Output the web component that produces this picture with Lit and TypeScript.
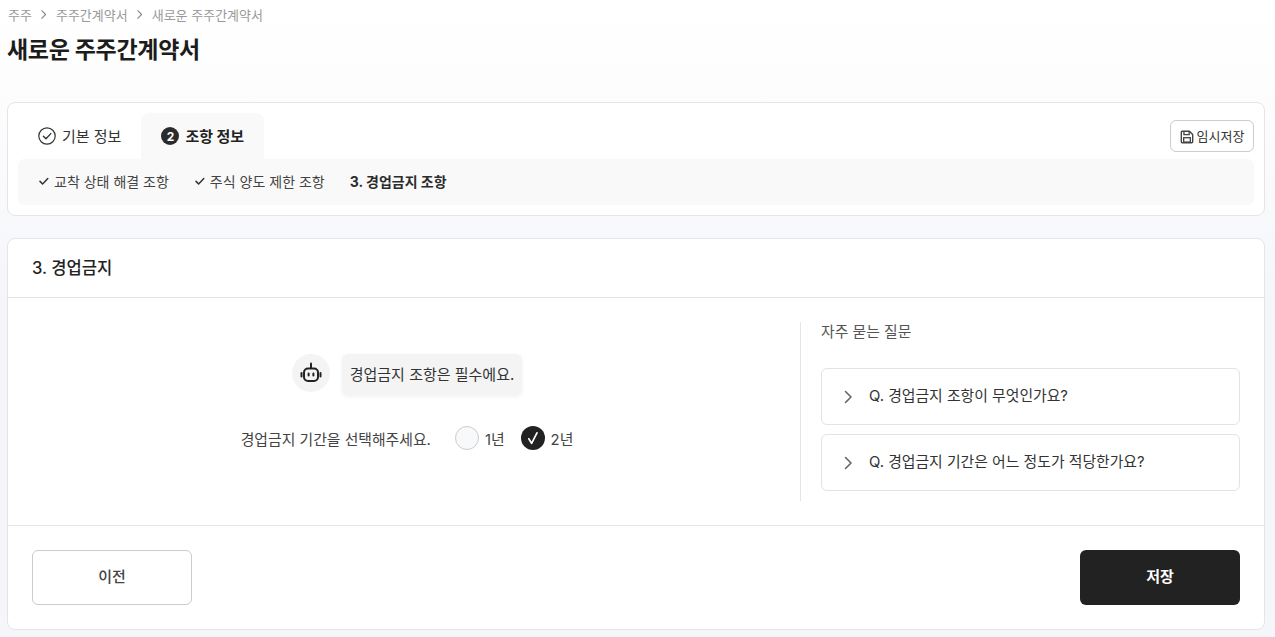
import { LitElement, css, html, svg } from 'lit';
import { customElement } from 'lit/decorators.js';

const chevron = (size: number) => html`
  <svg width=${size} height=${size} viewBox="0 0 16 16" fill="none" stroke="currentColor" stroke-width="1.6" stroke-linecap="round" stroke-linejoin="round">
    <path d="M5.5 2.5 11 8l-5.5 5.5" />
  </svg>
`;

const tick = html`
  <svg class="tick" width="12" height="12" viewBox="0 0 12 12" fill="none" stroke="#333" stroke-width="1.5" stroke-linecap="round" stroke-linejoin="round">
    <path d="M2 6.4 4.6 9l5.2-5.4" />
  </svg>
`;

const floppy = svg`
  <path d="M2.5 1.5h8.3l3.7 3.7v8.3a1 1 0 0 1-1 1h-11a1 1 0 0 1-1-1v-11a1 1 0 0 1 1-1z" fill="none" stroke="#444" stroke-width="1.6" stroke-linejoin="round" />
  <path d="M4.5 2v3.2h6V2" fill="none" stroke="#444" stroke-width="1.5" />
  <rect x="4.2" y="8.8" width="7.6" height="5" fill="none" stroke="#444" stroke-width="1.5" />
`;

@customElement('app-root')
export class AppRoot extends LitElement {
  static styles = css`
    :host {
      display: block;
      box-sizing: border-box;
      height: 637px;
      overflow: hidden;
      padding: 0 10px 0 7px;
      background: linear-gradient(#ffffff 0, #fdfdfe 90px, #f5f6fa 300px);
      font-family: 'Inter', 'Noto Sans CJK KR', sans-serif;
      color: #222;
    }
    .crumbs {
      display: flex;
      align-items: center;
      gap: 6.5px;
      height: 30px;
      padding: 0 0 2px 1px;
      box-sizing: border-box;
      font-size: 13px;
      color: #999;
    }
    .crumbs svg {
      color: #888;
    }
    h1 {
      margin: 0;
      height: 72px;
      padding-top: 5px;
      box-sizing: border-box;
      font-size: 23px;
      line-height: 30px;
      font-weight: 700;
      letter-spacing: -0.3px;
      color: #1c1c1c;
    }
    .card {
      background: #fff;
      border: 1px solid #e5e5e8;
      border-radius: 8px;
      box-sizing: border-box;
    }
    .steps {
      height: 114px;
      padding: 10px;
      margin-bottom: 22px;
    }
    .tabs {
      display: flex;
      align-items: flex-start;
      height: 46px;
    }
    .tab {
      display: flex;
      align-items: center;
      gap: 6px;
      height: 46px;
      padding: 0 20px 2px;
      font-size: 15px;
      color: #333;
      box-sizing: border-box;
    }
    .tab svg,
    .num {
      margin-top: 2px;
    }
    .tab.on {
      background: #f9f9fa;
      border-radius: 8px 8px 0 0;
      font-weight: 700;
      color: #222;
      width: 123px;
    }
    .num {
      width: 18px;
      height: 18px;
      border-radius: 50%;
      background: #2b2b2b;
      color: #fff;
      font-size: 12px;
      font-weight: 700;
      display: flex;
      align-items: center;
      justify-content: center;
    }
    .draft {
      margin: 7px 0 0 auto;
      width: 84px;
      height: 32px;
      box-sizing: border-box;
      border: 1px solid #ccc;
      border-radius: 6px;
      background: #fff;
      display: flex;
      align-items: center;
      justify-content: center;
      gap: 3px;
      font: inherit;
      font-size: 13px;
      color: #333;
      padding: 0 0 2px;
    }
    .draft svg {
      margin-top: 3px;
    }
    .subs {
      display: flex;
      align-items: center;
      gap: 25px;
      height: 46px;
      background: #f9f9fa;
      border-radius: 6px;
      padding: 0 20px 3px;
      box-sizing: border-box;
      font-size: 14px;
      color: #444;
    }
    .subs span {
      display: flex;
      align-items: center;
      gap: 4px;
    }
    .subs .now {
      font-weight: 700;
      color: #2b2b2b;
    }
    .main {
      height: 392px;
      display: flex;
      flex-direction: column;
    }
    .head {
      height: 59px;
      flex: none;
      display: flex;
      align-items: center;
      padding: 0 24px 3px;
      box-sizing: border-box;
      font-size: 16.6px;
      font-weight: 500;
      color: #222;
      border-bottom: 1px solid #e5e5e8;
    }
    .body {
      height: 228px;
      flex: none;
      box-sizing: border-box;
      display: flex;
      padding: 24px 24px 24px 0;
      border-bottom: 1px solid #e5e5e8;
    }
    .ask {
      width: 793px;
      flex: none;
      display: flex;
      flex-direction: column;
      align-items: center;
      padding: 32px 0 0 6px;
      box-sizing: border-box;
      border-right: 1px solid #e5e5e8;
    }
    .bot {
      display: flex;
      align-items: flex-start;
      gap: 12px;
    }
    .avatar {
      width: 38px;
      height: 38px;
      border-radius: 50%;
      background: #f4f4f4;
      display: flex;
      align-items: center;
      justify-content: center;
    }
    .bubble {
      height: 42px;
      padding: 0 8px 4px;
      box-sizing: border-box;
      display: flex;
      align-items: center;
      background: #f4f4f5;
      border-radius: 6px;
      box-shadow: 0 1px 4px rgba(0, 0, 0, 0.05);
      font-size: 15px;
      color: #333;
    }
    .choice {
      display: flex;
      align-items: center;
      margin-top: 30px;
      font-size: 14.85px;
      color: #444;
    }
    .opt {
      display: flex;
      align-items: center;
      gap: 6px;
      margin-left: 16px;
    }
    .choice .opt:first-of-type {
      margin-left: 24px;
    }
    .radio {
      width: 24px;
      height: 24px;
      box-sizing: border-box;
      border-radius: 50%;
      border: 1px solid #ccc;
      background: #f8f9fb;
    }
    .radio.on {
      border: 0;
      background: #222;
      display: flex;
      align-items: center;
      justify-content: center;
    }
    .faq {
      flex: 1;
      padding-left: 20px;
    }
    .faq h2 {
      margin: 0 0 26px;
      font-size: 14.85px;
      line-height: 20px;
      font-weight: 400;
      color: #555;
    }
    .q {
      display: flex;
      align-items: center;
      gap: 13px;
      height: 57px;
      box-sizing: border-box;
      padding: 0 19px 4px 18px;
      margin-bottom: 9px;
      border: 1px solid #e3e3e6;
      border-radius: 6px;
      font-size: 14.85px;
      color: #333;
    }
    .q svg {
      color: #666;
      margin-top: 4px;
    }
    .foot {
      height: 104px;
      flex: none;
      display: flex;
      justify-content: space-between;
      align-items: flex-start;
      padding: 24px 24px 0;
      box-sizing: border-box;
    }
    .btn {
      width: 160px;
      height: 55px;
      border-radius: 6px;
      box-sizing: border-box;
      border: 1px solid #ccc;
      background: #fff;
      font: inherit;
      font-size: 15px;
      font-weight: 500;
      color: #444;
      padding: 0 0 4px;
    }
    .btn.primary {
      border: 0;
      background: #222;
      color: #fff;
      font-weight: 700;
    }
  `;

  render() {
    return html`
      <nav class="crumbs">
        <span>주주</span>${chevron(11)}<span>주주간계약서</span>${chevron(11)}<span>새로운 주주간계약서</span>
      </nav>
      <h1>새로운 주주간계약서</h1>

      <section class="card steps">
        <div class="tabs">
          <div class="tab">
            <svg width="18" height="18" viewBox="0 0 18 18" fill="none" stroke="#333" stroke-width="1.2" stroke-linecap="round" stroke-linejoin="round">
              <circle cx="9" cy="9" r="8.2" />
              <path d="M5.4 9.2 8 11.8l4.8-5.2" stroke-width="1.4" />
            </svg>
            기본 정보
          </div>
          <div class="tab on"><span class="num">2</span>조항 정보</div>
          <button class="draft">
            <svg width="14" height="14" viewBox="0 0 16 16">${floppy}</svg>
            임시저장
          </button>
        </div>
        <div class="subs">
          <span>${tick}교착 상태 해결 조항</span>
          <span>${tick}주식 양도 제한 조항</span>
          <span class="now">3. 경업금지 조항</span>
        </div>
      </section>

      <section class="card main">
        <div class="head">3. 경업금지</div>
        <div class="body">
          <div class="ask">
            <div class="bot">
              <div class="avatar">
                <svg width="22" height="22" viewBox="0 0 22 22" fill="none" stroke="#222" stroke-width="2" stroke-linecap="round" stroke-linejoin="round">
                  <path d="M11 1.5v4.5" />
                  <rect x="4" y="6.5" width="14" height="12.5" rx="4" />
                  <path d="M1.5 11v3.5M20.5 11v3.5" />
                  <path d="M8.6 11.4v2M13.4 11.4v2" />
                </svg>
              </div>
              <div class="bubble">경업금지 조항은 필수에요.</div>
            </div>
            <div class="choice">
              <span>경업금지 기간을 선택해주세요.</span>
              <label class="opt"><span class="radio"></span>1년</label>
              <label class="opt">
                <span class="radio on">
                  <svg width="14" height="14" viewBox="0 0 14 14" fill="none" stroke="#fff" stroke-width="1.7" stroke-linecap="round" stroke-linejoin="round">
                    <path d="M2.8 7.8 5.6 12.4 11 1.8" />
                  </svg>
                </span>
                2년
              </label>
            </div>
          </div>
          <div class="faq">
            <h2>자주 묻는 질문</h2>
            <div class="q">${chevron(16)}Q. 경업금지 조항이 무엇인가요?</div>
            <div class="q">${chevron(16)}Q. 경업금지 기간은 어느 정도가 적당한가요?</div>
          </div>
        </div>
        <div class="foot">
          <button class="btn">이전</button>
          <button class="btn primary">저장</button>
        </div>
      </section>
    `;
  }
}
